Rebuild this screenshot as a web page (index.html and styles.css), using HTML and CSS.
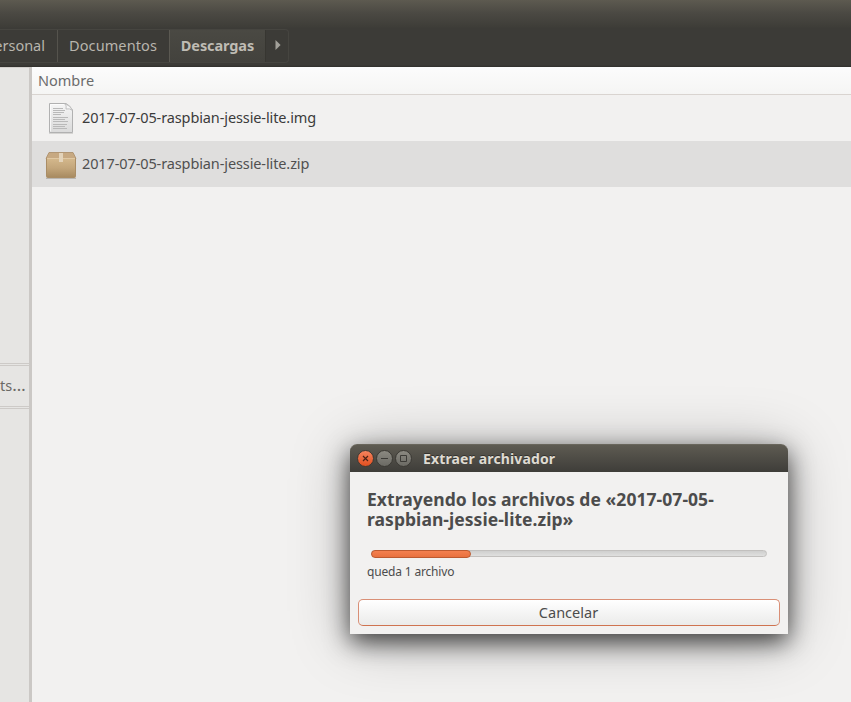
FILE: index.html
```html
<!DOCTYPE html>
<html lang="es">
<head>
<meta charset="utf-8">
<title>Descargas</title>
<link rel="stylesheet" href="styles.css">
</head>
<body>
<div class="window">
  <header class="chrome">
    <nav class="pathbar">
      <div class="crumb crumb-first"><span class="label">Personal</span></div>
      <div class="crumb crumb-docs"><span class="label t-docs">Documentos</span></div>
      <div class="crumb crumb-active"><span class="label t-desc">Descargas</span></div>
      <div class="crumb crumb-next"><svg width="6" height="10" viewBox="0 0 6 10"><path d="M.5 0 5.6 5 .5 10z" fill="#a3a19a"/></svg></div>
    </nav>
  </header>
  <div class="body">
    <aside class="sidebar">
      <div class="side-top"></div>
      <div class="side-item"><span class="label">ts<span class="dots">…</span></span></div>
      <div class="side-rest"></div>
    </aside>
    <main class="files">
      <div class="colhead"><span class="label">Nombre</span></div>
      <div class="row">
        <svg class="icon" width="32" height="32" viewBox="0 0 32 32">
          <defs><linearGradient id="paper" x1="0" y1="0" x2="0" y2="1"><stop offset="0" stop-color="#f6f6f6"/><stop offset="1" stop-color="#dadada"/></linearGradient></defs>
          <path d="M4 31.5h24" stroke="#d5d4d2"/>
          <path d="M4.500 1.500h16.500q4 2 6.500 6.500v22.500h-23z" fill="url(#paper)" stroke="#b1b1b1"/>
          <path d="M5.500 29.500v-27h14" fill="none" stroke="#fff" stroke-opacity=".7"/>
          <path d="M19.500 1.500q2.500 2 1.500 5.500 3.500-1 6.500 1.500-2-5-8-7z" fill="#f7f7f7" stroke="#b5b5b5" stroke-width=".8"/>
          <path d="M8 6.500h10M8 8.500h12M8 10.500h11M8 12.500h8M8 15.500h15M8 17.500h12M8 19.500h15M8 22.500h14M8 24.500h12M8 26.500h14" stroke="#b9b9b9"/>
        </svg>
        <span class="label name">2017-07-05-raspbian-jessie-lite.img</span>
      </div>
      <div class="row row-cut">
        <svg class="icon" width="32" height="32" viewBox="0 0 32 32">
          <defs><linearGradient id="box" x1="0" y1="0" x2="0" y2="1"><stop offset="0" stop-color="#d4b88c"/><stop offset=".5" stop-color="#c3a67b"/><stop offset="1" stop-color="#a78a60"/></linearGradient></defs>
          <path d="M1 30.500h30" stroke="#b9b6b1"/>
          <path d="M4 4.500h24l3 6H1z" fill="#c7a982" stroke="#aa8c66" stroke-width=".8"/>
          <path d="M1.500 10.500h29v18q0 1-1 1h-27q-1 0-1-1z" fill="url(#box)" stroke="#aa8d65"/>
          <path d="M2 10.500h28" stroke="#e0c8a3"/>
          <path d="M14 5h4v9h-4z" fill="#e3d3ba"/>
        </svg>
        <span class="label name">2017-07-05-raspbian-jessie-lite.zip</span>
      </div>
    </main>
  </div>
  <section class="dialog">
    <div class="titlebar">
      <svg class="controls" width="57" height="18" viewBox="0 0 57 18">
        <defs>
          <linearGradient id="red" x1="0" y1="0" x2="0" y2="1"><stop offset="0" stop-color="#f78560"/><stop offset="1" stop-color="#e04e1e"/></linearGradient>
          <linearGradient id="grey" x1="0" y1="0" x2="0" y2="1"><stop offset="0" stop-color="#8c8a82"/><stop offset="1" stop-color="#6a6963"/></linearGradient>
        </defs>
        <g stroke="#3a3833"><circle cx="9.500" cy="8.500" r="8" fill="url(#red)"/><circle cx="28.500" cy="8.500" r="8" fill="url(#grey)"/><circle cx="47.500" cy="8.500" r="8" fill="url(#grey)"/></g>
        <path d="M7 6l5 5m0-5l-5 5" stroke="#4b2317" stroke-width="1.200"/>
        <path d="M25 8.500h7" stroke="#3c3b37"/>
        <path d="M44.500 5.500h6v6h-6z" fill="none" stroke="#3c3b37"/>
      </svg>
      <span class="t-title">Extraer archivador</span>
    </div>
    <div class="content">
      <h1>Extrayendo los archivos de «2017-07-05-<br>raspbian-jessie-lite.zip»</h1>
      <div class="progress"><div class="bar"></div></div>
      <p>queda 1 archivo</p>
      <button class="cancel"><span class="label">Cancelar</span></button>
    </div>
  </section>
</div>
</body>
</html>
```
FILE: styles.css
```css
* { box-sizing: border-box; }
body { margin: 0; font-family: "Noto Sans", sans-serif; font-size: 14.5px; color: #3c3c3c; }
span { white-space: nowrap; }
.label { padding-bottom: 2px; }
.window { position: relative; width: 851px; height: 702px; overflow: hidden; background: #f2f1f0; display: flex; flex-direction: column; }
.chrome { height: 67px; padding-top: 29px; background: linear-gradient(#5d5a50 0, #4b4943 13px, #3e3d38 27px, #3c3b37 28px, #3c3b37 65px, #302f2c 67px); }
.pathbar { display: flex; width: 289px; height: 34px; border: 1px solid #464540; border-left: 0; border-radius: 0 4px 4px 0; overflow: hidden; }
.crumb { display: flex; align-items: center; justify-content: center; color: #b8b5ad; }
.crumb-first { width: 57px; justify-content: flex-end; padding-right: 12px; }
.crumb-docs { width: 112px; border-left: 1px solid #55534d; }
.t-docs { letter-spacing: .1px; margin-right: 1px; }
.crumb-active { width: 97px; border-left: 1px solid #5b5952; border-right: 1px solid #373631; background: linear-gradient(#4a4943, #43423d); font-weight: 700; color: #bfbcb4; }
.t-desc { letter-spacing: -.1px; }
.crumb-next { flex: 1; padding: 0 0 2px 2px; }
.body { display: flex; flex: 1; }
.sidebar { width: 32px; border-right: 3px solid #cbc8c5; background: #e6e5e3; display: flex; flex-direction: column; color: #6b6965; }
.side-top { height: 297px; border-top: 1px solid #d3d0cd; border-bottom: 1px solid #cdcac7; }
.side-item { height: 42px; margin-top: 1px; border-top: 1px solid #cdcac7; border-bottom: 1px solid #cdcac7; display: flex; align-items: center; }
.dots { font-size: 17px; line-height: 1; }
.side-rest { flex: 1; margin-top: 1px; border-top: 1px solid #cdcac7; }
.files { flex: 1; }
.colhead { height: 28px; padding-left: 6px; display: flex; align-items: center; background: linear-gradient(#fcfcfc, #f5f5f4); border-bottom: 1px solid #d9d4d0; color: #6c6c6c; }
.row { height: 46px; display: flex; align-items: center; padding-left: 13px; color: #3b3b3b; }
.row-cut { background: #dfdedd; color: #505050; }
.name { letter-spacing: -.11px; }
.icon { margin-right: 5px; }
.dialog { position: absolute; left: 350px; top: 444px; width: 438px; height: 190px; background: #f2f1f0; border-radius: 7px 7px 0 0; box-shadow: 0 8px 24px rgba(0,0,0,.7), 0 5px 60px rgba(0,0,0,.28); }
.titlebar { height: 28px; display: flex; align-items: center; padding-left: 6px; background: linear-gradient(#5e5b52, #3e3d39); border-radius: 7px 7px 0 0; border-top: 1px solid #69665c; color: #dfdbd2; font-weight: 700; font-size: 14px; text-shadow: 0 -1px 0 #33322e; }
.t-title { letter-spacing: .14px; }
.controls { margin-right: 10px; }
.content { padding: 17px 8px 8px; display: flex; flex-direction: column; }
h1 { margin: 0 0 0 9px; font-size: 17.5px; line-height: 20px; letter-spacing: .05px; color: #4c4c4c; white-space: nowrap; }
.progress { height: 7px; margin: 21px 13px 0; background: linear-gradient(#cfcfce, #e0e0df); display: flex; border: 1px solid #c2c0be; border-radius: 4px; }
.bar { width: 100px; height: 8px; margin: -1px; border: 1px solid #bd5a30; border-radius: 4px; background: linear-gradient(#f4804f, #e9713f); }
p { margin: 6px 0 0 9px; height: 18px; line-height: 18px; font-size: 12px; letter-spacing: -.17px; color: #4c4c4c; }
.cancel { display: flex; align-items: center; justify-content: center; margin: 18px 0 0; height: 27px; width: 422px; border: 1px solid #d98f76; border-bottom-color: #cf7350; border-radius: 5px; background: linear-gradient(#fff, #ebebea); font: 14.5px "Noto Sans", sans-serif; color: #4c4c4c; padding: 0 1px 0 0; }
```
